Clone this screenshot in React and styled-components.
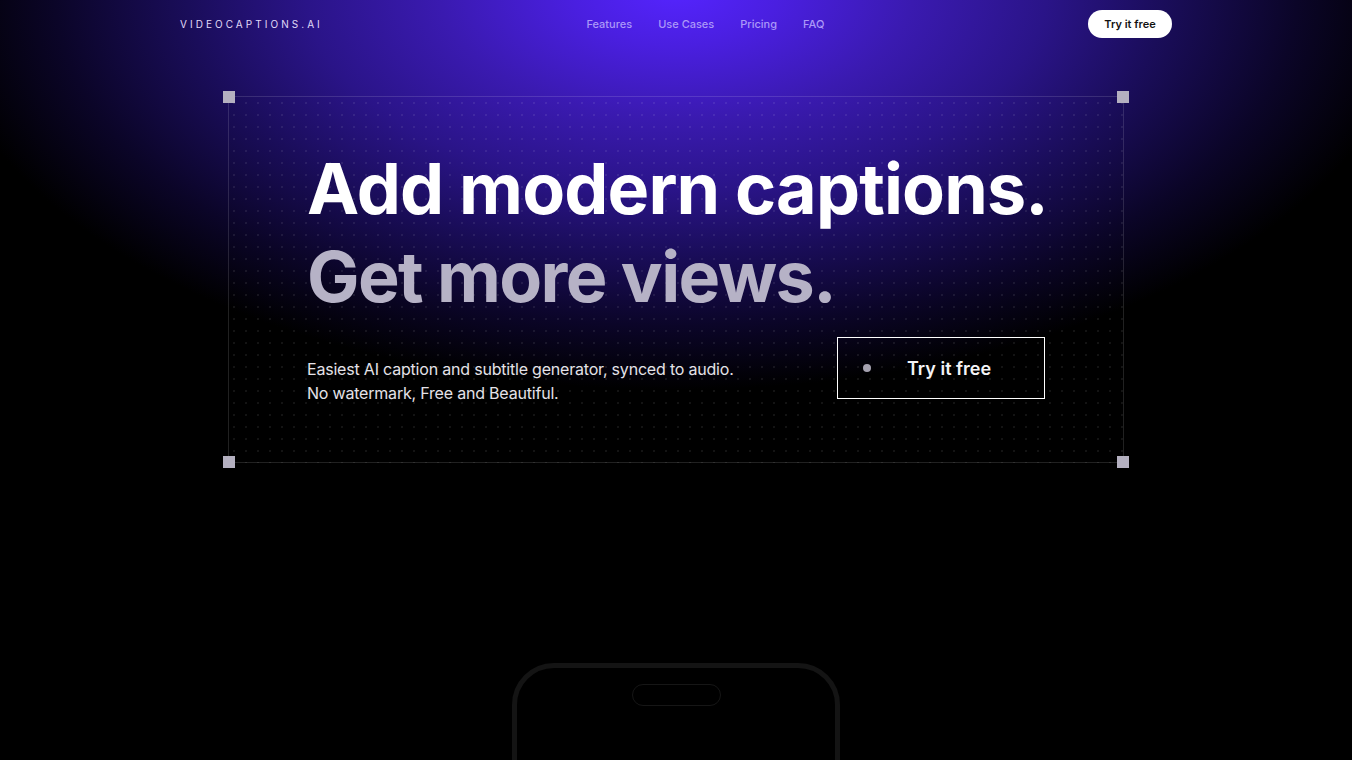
import React from 'react'
import styled, { createGlobalStyle } from 'styled-components'

const GlobalStyle = createGlobalStyle`
	* { box-sizing: border-box; }
	html, body {
		margin: 0;
		height: 100%;
		background: #000;
		overflow: hidden;
	}
	body {
		font-family: Inter, "Liberation Sans", sans-serif;
		color: #fff;
	}
`

const Page = styled.div`
	height: 760px;
	overflow: hidden;
	background:
		radial-gradient(ellipse 740px 400px at 676px -10px,
			#5524ff 0%,
			#4a1fe0 14%,
			#3a1ab0 32%,
			#2a1488 50%,
			#1a0d5a 66%,
			#0b0528 84%,
			#000 100%);
`

const Nav = styled.header`
	width: 992px;
	height: 48px;
	margin: 0 auto;
	display: flex;
	justify-content: space-between;
	align-items: center;
`

const Logo = styled.a`
	font-size: 10px;
	letter-spacing: 0.305em;
	color: #e0dbf8;
`

const Links = styled.nav`
	display: flex;
	gap: 26px;
	font-size: 11px;
	font-weight: 500;
	color: #ab98f8;
`

const NavButton = styled.button`
	height: 28px;
	width: 84px;
	padding: 0;
	border: 0;
	border-radius: 14px;
	background: #fff;
	color: #111;
	font: 600 11px Inter, sans-serif;
`

const Frame = styled.section`
	position: relative;
	width: 896px;
	height: 367px;
	margin: 48px auto 0;
	padding: 48px 78px 0;
	border: 1px solid rgba(255, 255, 255, 0.13);
	background-image: radial-gradient(circle, rgba(255, 255, 255, 0.08) 0.7px, transparent 1px);
	background-size: 12px 12px;
	background-position: -1px 0;
`

const Handle = styled.span`
	position: absolute;
	width: 12px;
	height: 12px;
	background: #b4b0c0;
	${({ $top }) => ($top ? 'top: -6px;' : 'bottom: -6px;')}
	${({ $left }) => ($left ? 'left: -6px;' : 'right: -6px;')}
`

const Title = styled.h1`
	margin: 0;
	font-size: 70px;
	line-height: 88px;
	font-weight: 700;
	white-space: nowrap;
	letter-spacing: ${({ $muted }) => ($muted ? '-0.023em' : '-0.012em')};
	color: ${({ $muted }) => ($muted ? '#b6b2c6' : '#fff')};
`

const Bottom = styled.div`
	display: flex;
	justify-content: space-between;
	align-items: flex-start;
	margin-top: 16px;
`

const Lead = styled.p`
	margin: 20px 0 0;
	font-size: 16px;
	line-height: 24px;
	letter-spacing: -0.2px;
	color: #e4e2e8;
`

const HeroButton = styled.button`
	display: flex;
	align-items: center;
	width: 208px;
	height: 62px;
	padding: 0 25px;
	background: transparent;
	border: 1px solid #fff;
	color: #f4f4f6;
	font: 600 18px Inter, sans-serif;
`

const Dot = styled.span`
	width: 8px;
	height: 8px;
	margin-right: 36px;
	border-radius: 50%;
	background: #a5a2b0;
`

const Phone = styled.div`
	width: 328px;
	height: 660px;
	margin: 200px auto 0;
	border: 5px solid #141414;
	border-radius: 42px;
`

const Island = styled.div`
	width: 89px;
	height: 22px;
	margin: 16px auto 0;
	border: 1px solid #161616;
	border-radius: 11px;
`

export default () => (
	<Page>
		<GlobalStyle />
		<Nav>
			<Logo>VIDEOCAPTIONS.AI</Logo>
			<Links>
				<span>Features</span>
				<span>Use Cases</span>
				<span>Pricing</span>
				<span>FAQ</span>
			</Links>
			<NavButton>Try it free</NavButton>
		</Nav>
		<Frame>
			<Handle $top $left />
			<Handle $top />
			<Handle $left />
			<Handle />
			<Title>Add modern captions.</Title>
			<Title $muted>Get more views.</Title>
			<Bottom>
				<Lead>
					Easiest AI caption and subtitle generator, synced to audio.<br />
					No watermark, Free and Beautiful.
				</Lead>
				<HeroButton><Dot />Try it free</HeroButton>
			</Bottom>
		</Frame>
		<Phone>
			<Island />
		</Phone>
	</Page>
)
